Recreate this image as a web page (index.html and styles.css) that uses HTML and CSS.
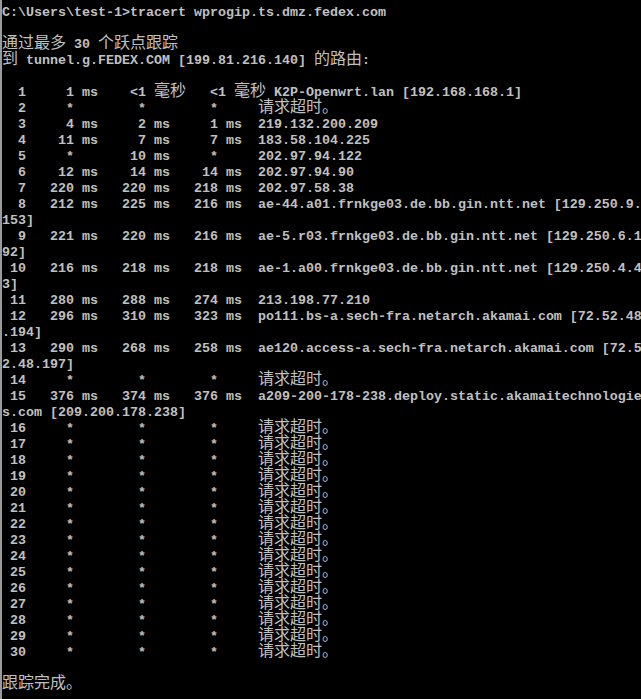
FILE: index.html
```html
<!DOCTYPE html>
<html lang="zh-CN">
<head>
<meta charset="utf-8">
<title>tracert</title>
<link rel="stylesheet" href="styles.css">
</head>
<body>
<div class="console">
<div class="ln">C:\Users\test-1&gt;tracert wprogip.ts.dmz.fedex.com</div>
<div class="ln"></div>
<div class="ln"><span class="cjk">通过最多</span> 30 <span class="cjk">个跃点跟踪</span></div>
<div class="ln"><span class="cjk">到</span> tunnel.g.FEDEX.COM [199.81.216.140] <span class="cjk">的路由</span>:</div>
<div class="ln"></div>
<div class="ln">  1     1 ms    &lt;1 <span class="cjk">毫秒</span>   &lt;1 <span class="cjk">毫秒</span> K2P-Openwrt.lan [192.168.168.1]</div>
<div class="ln">  2     *        *        *     <span class="cjk">请求超时。</span></div>
<div class="ln">  3     4 ms     2 ms     1 ms  219.132.200.209</div>
<div class="ln">  4    11 ms     7 ms     7 ms  183.58.104.225</div>
<div class="ln">  5     *       10 ms     *     202.97.94.122</div>
<div class="ln">  6    12 ms    14 ms    14 ms  202.97.94.90</div>
<div class="ln">  7   220 ms   220 ms   218 ms  202.97.58.38</div>
<div class="ln">  8   212 ms   225 ms   216 ms  ae-44.a01.frnkge03.de.bb.gin.ntt.net [129.250.9.</div>
<div class="ln">153]</div>
<div class="ln">  9   221 ms   220 ms   216 ms  ae-5.r03.frnkge03.de.bb.gin.ntt.net [129.250.6.1</div>
<div class="ln">92]</div>
<div class="ln"> 10   216 ms   218 ms   218 ms  ae-1.a00.frnkge03.de.bb.gin.ntt.net [129.250.4.4</div>
<div class="ln">3]</div>
<div class="ln"> 11   280 ms   288 ms   274 ms  213.198.77.210</div>
<div class="ln"> 12   296 ms   310 ms   323 ms  po111.bs-a.sech-fra.netarch.akamai.com [72.52.48</div>
<div class="ln">.194]</div>
<div class="ln"> 13   290 ms   268 ms   258 ms  ae120.access-a.sech-fra.netarch.akamai.com [72.5</div>
<div class="ln">2.48.197]</div>
<div class="ln"> 14     *        *        *     <span class="cjk">请求超时。</span></div>
<div class="ln"> 15   376 ms   374 ms   376 ms  a209-200-178-238.deploy.static.akamaitechnologie</div>
<div class="ln">s.com [209.200.178.238]</div>
<div class="ln"> 16     *        *        *     <span class="cjk">请求超时。</span></div>
<div class="ln"> 17     *        *        *     <span class="cjk">请求超时。</span></div>
<div class="ln"> 18     *        *        *     <span class="cjk">请求超时。</span></div>
<div class="ln"> 19     *        *        *     <span class="cjk">请求超时。</span></div>
<div class="ln"> 20     *        *        *     <span class="cjk">请求超时。</span></div>
<div class="ln"> 21     *        *        *     <span class="cjk">请求超时。</span></div>
<div class="ln"> 22     *        *        *     <span class="cjk">请求超时。</span></div>
<div class="ln"> 23     *        *        *     <span class="cjk">请求超时。</span></div>
<div class="ln"> 24     *        *        *     <span class="cjk">请求超时。</span></div>
<div class="ln"> 25     *        *        *     <span class="cjk">请求超时。</span></div>
<div class="ln"> 26     *        *        *     <span class="cjk">请求超时。</span></div>
<div class="ln"> 27     *        *        *     <span class="cjk">请求超时。</span></div>
<div class="ln"> 28     *        *        *     <span class="cjk">请求超时。</span></div>
<div class="ln"> 29     *        *        *     <span class="cjk">请求超时。</span></div>
<div class="ln"> 30     *        *        *     <span class="cjk">请求超时。</span></div>
<div class="ln"></div>
<div class="ln"><span class="cjk">跟踪完成。</span></div>
</div>
</body>
</html>
```
FILE: styles.css
```css
html, body {
  margin: 0;
  padding: 0;
  background: #000;
  height: 100%;
  overflow: hidden;
}

.console {
  box-sizing: border-box;
  min-height: 100vh;
  border-left: 2px solid #9a9a9a;
  padding: 5px 0 0 0;
  background: #000;
  color: #c0c0c0;
  font-family: "Liberation Mono", "DejaVu Sans Mono", monospace;
  font-size: 13.333px;
  font-weight: bold;
  line-height: 16px;
}

.ln {
  height: 16px;
  white-space: pre;
}

.cjk {
  font-family: "Noto Sans CJK SC", sans-serif;
  font-size: 16px;
  font-weight: normal;
  line-height: 0;
}
```
